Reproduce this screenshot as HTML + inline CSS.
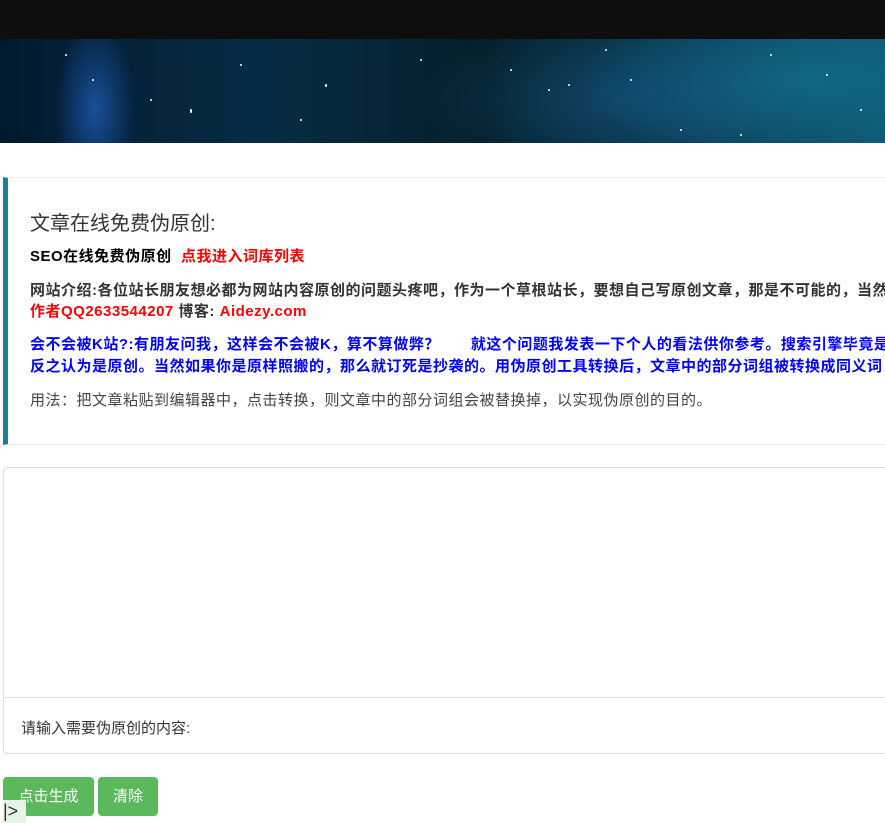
<!DOCTYPE html>
<html><head><meta charset="utf-8"><style>
*{margin:0;padding:0;box-sizing:border-box}
body{width:885px;height:823px;overflow:hidden;background:#fff;font-family:"Liberation Sans","Noto Sans CJK SC",sans-serif;color:#333;position:relative}
.top{height:39px;background:#0e0e0e}
.ban{height:104px;background:
radial-gradient(ellipse 40px 90px at 95px 70px,rgba(40,110,220,.6),transparent),
radial-gradient(ellipse 200px 80px at 620px 60px,rgba(30,100,160,.4),transparent),
radial-gradient(ellipse 220px 90px at 800px 40px,rgba(20,130,160,.5),transparent),
linear-gradient(90deg,#021a30,#062c45 30%,#03202a 55%,#0a3d55 80%,#0f5670);position:relative}
.s{position:absolute;width:2px;height:2px;background:#fff;border-radius:1px}
.card{position:absolute;left:3px;top:177px;width:900px;height:268px;border:1px solid #eee;border-left:5px solid #1b809e}
.card h3{position:absolute;left:22px;top:29px;font-size:20px;font-weight:normal;color:#333}
.p{position:absolute;left:22px;font-size:15px;letter-spacing:.5px;font-weight:bold;white-space:nowrap;line-height:20px}
.red{color:#f00}.blue{color:#00f}
.ta{position:absolute;left:3px;top:467px;width:900px;height:231px;border:1px solid #ddd;border-bottom:none;border-radius:4px 0 0 0}
.in{position:absolute;left:3px;top:697px;width:900px;height:57px;border:1px solid #ddd;border-radius:0 0 0 4px;padding:19px 17px;font-size:15px}
.btn{position:absolute;top:777px;height:39px;background:#5cb85c;color:#fff;font-size:15px;border-radius:4px;line-height:39px;text-align:center}
</style></head><body>
<div class="top"></div>
<div class="ban">
<div class="s" style="left:65px;top:15px"></div><div class="s" style="left:92px;top:40px"></div><div class="s" style="left:190px;top:70px;height:4px"></div><div class="s" style="left:325px;top:45px;height:3px"></div><div class="s" style="left:548px;top:50px"></div><div class="s" style="left:568px;top:45px"></div><div class="s" style="left:605px;top:10px"></div><div class="s" style="left:630px;top:40px"></div><div class="s" style="left:770px;top:15px"></div><div class="s" style="left:826px;top:35px"></div><div class="s" style="left:740px;top:95px"></div><div class="s" style="left:680px;top:90px"></div><div class="s" style="left:300px;top:80px"></div><div class="s" style="left:420px;top:20px"></div><div class="s" style="left:150px;top:60px"></div><div class="s" style="left:860px;top:70px"></div><div class="s" style="left:510px;top:30px"></div><div class="s" style="left:240px;top:25px"></div>
</div>
<div class="card">
<h3>文章在线免费伪原创:</h3>
<div class="p" style="top:69px;color:#000">SEO在线免费伪原创 &nbsp;<span class="red">点我进入词库列表</span></div>
<div class="p" style="top:103px">网站介绍:各位站长朋友想必都为网站内容原创的问题头疼吧，作为一个草根站长，要想自己写原创文章，那是不可能的，当然</div>
<div class="p" style="top:124px"><span class="red">作者QQ2633544207</span> 博客: <span class="red">Aidezy.com</span></div>
<div class="p blue" style="top:157px">会不会被K站?:有朋友问我，这样会不会被K，算不算做弊？　　就这个问题我发表一下个人的看法供你参考。搜索引擎毕竟是</div>
<div class="p blue" style="top:179px">反之认为是原创。当然如果你是原样照搬的，那么就订死是抄袭的。用伪原创工具转换后，文章中的部分词组被转换成同义词</div>
<div class="p" style="top:213px;font-weight:normal;color:#444">用法：把文章粘贴到编辑器中，点击转换，则文章中的部分词组会被替换掉，以实现伪原创的目的。</div>
</div>
<div class="ta"></div>
<div class="in">请输入需要伪原创的内容:</div>
<div class="btn" style="left:3px;width:91px">点击生成</div>
<div class="btn" style="left:98px;width:60px">清除</div>
<div style="position:absolute;left:3px;top:800px;width:23px;height:23px;background:#e8f3e8;font-size:18px;line-height:23px;color:#333">|&gt;</div>
</body></html>
